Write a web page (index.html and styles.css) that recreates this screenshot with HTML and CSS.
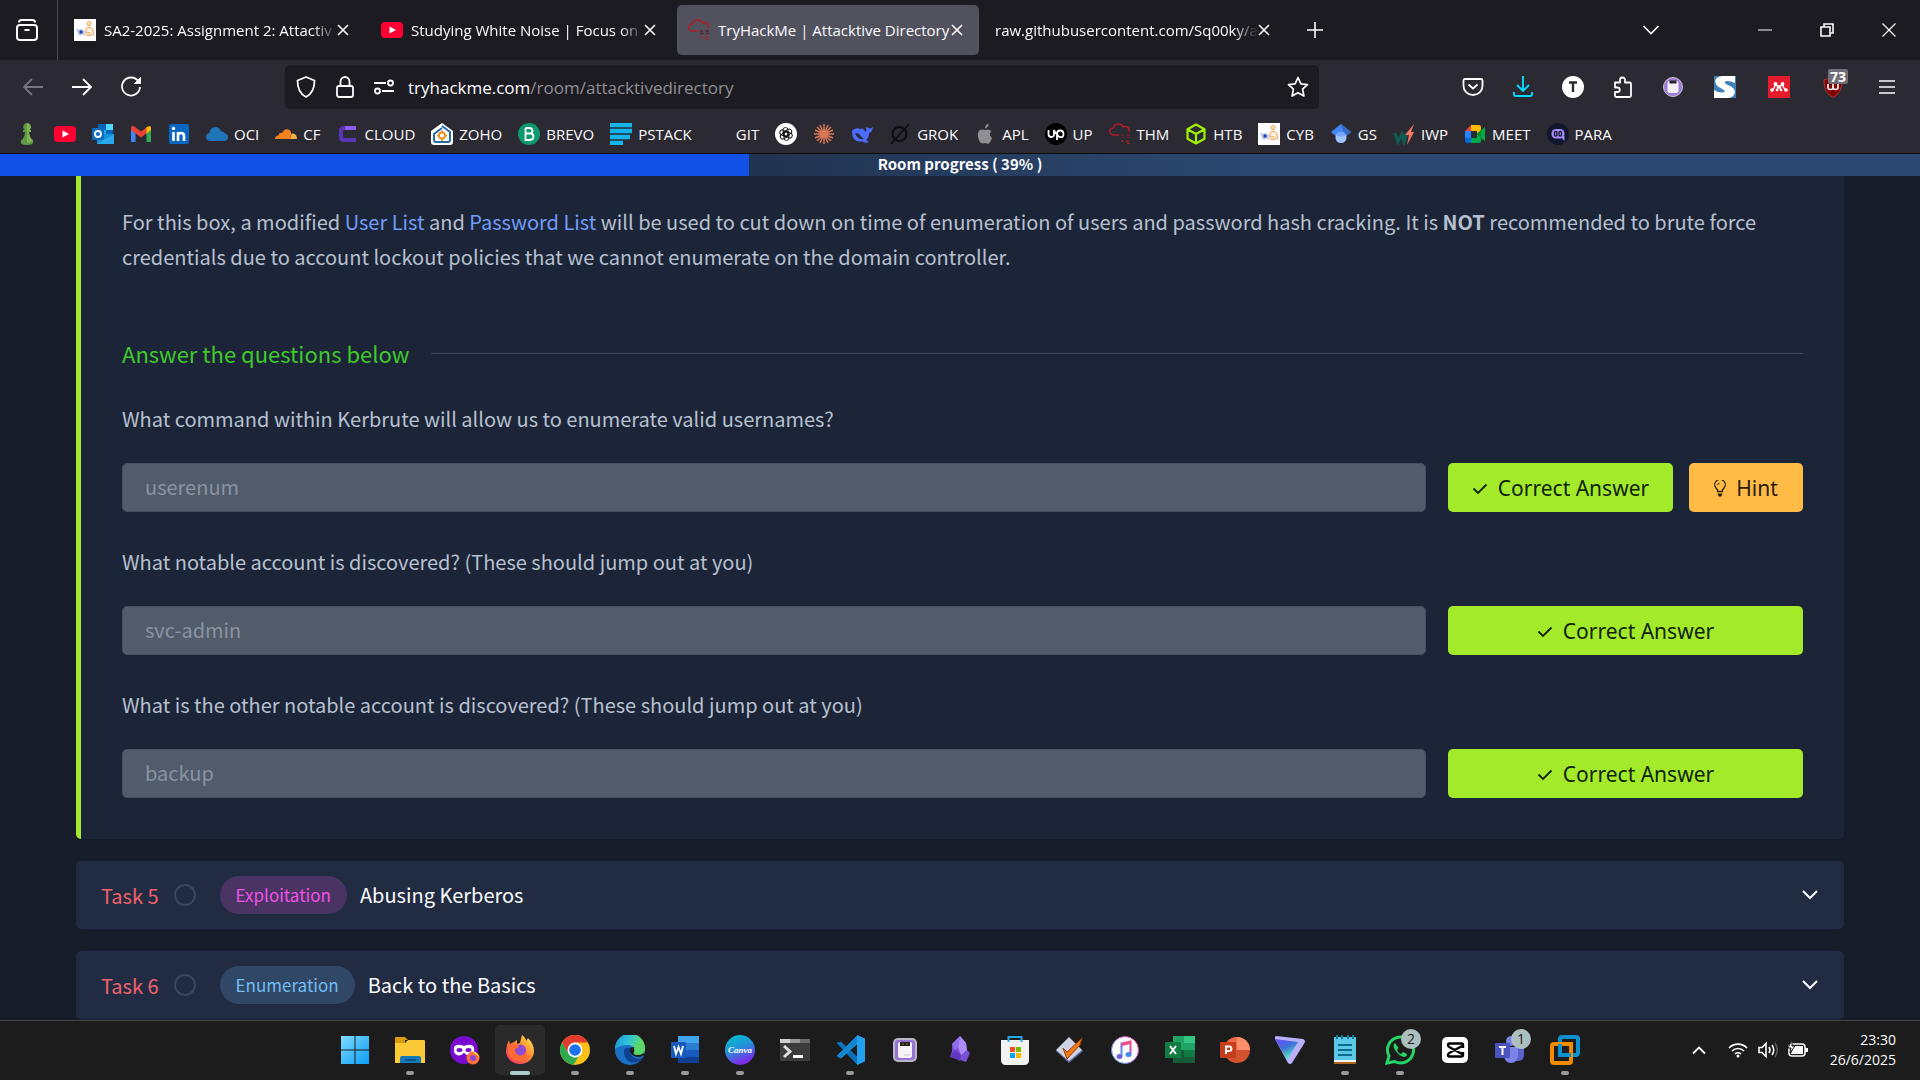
FILE: index.html
```html
<!DOCTYPE html>
<html lang="en">
<head>
  <meta charset="UTF-8">
  <meta name="viewport" content="width=device-width, initial-scale=1.0">
  <title>TryHackMe | Attacktive Directory</title>
  <link rel="stylesheet" href="styles.css">
</head>
<body>
  <!-- Shared icons -->
  <svg class="sprite" aria-hidden="true">
    <symbol id="i-close" viewBox="0 0 12 12"><path d="M1 1l10 10M11 1L1 11" stroke="currentColor" stroke-width="1.6" fill="none"/></symbol>
    <symbol id="i-youtube" viewBox="0 0 22 22"><rect x="0" y="3" width="22" height="16" rx="4" fill="#ff0033"/><path d="M8.500 7.500l6.500 3.500-6.500 3.500z" fill="#fff"/></symbol>
    <symbol id="i-cyb" viewBox="0 0 22 22"><rect width="22" height="22" fill="#fff"/><circle cx="15" cy="4.500" r="2" fill="#fbe3c4" stroke="#f2a24a"/><path d="M12.500 9q2.500-1.500 5 0 2.500 3 2 6.500-3 1.500-8 .5" fill="#fdf0df" stroke="#f2a24a"/><path d="M12.500 9.500l-1 4 5 .5" fill="none" stroke="#f2a24a"/><path d="M2 10l8 .5 1.500 5.500-7 .5z" fill="#c3cce8"/><circle cx="7" cy="13" r="1.700" fill="#1c3fae"/></symbol>
    <symbol id="i-thm" viewBox="0 0 22 22"><path d="M10 12H4a3.500 3.500 0 0 1 .3-7A5.500 5.500 0 0 1 14.500 4a4 4 0 0 1 5.500 5" fill="none" stroke="#b01d24" stroke-width="1.400"/><path d="M12 12h3M17 12h4M12 14.500h4M18 14.500h3" stroke="#5d2632" stroke-width="1.300"/><path d="M12 18h2.500M17 18h3M18 20.500h3" stroke="#a3242b" stroke-width="1.400"/></symbol>
    <symbol id="i-check" viewBox="0 0 16 16"><path d="M1.500 7.500l4.500 4.500L14.500 3.500" fill="none" stroke="currentColor" stroke-width="1.800"/></symbol>
    <symbol id="i-chevron" viewBox="0 0 18 12"><path d="M2 2l7 7 7-7" fill="none" stroke="currentColor" stroke-width="2"/></symbol>
    <symbol id="i-scale" viewBox="0 0 30 30"><rect x="3" y="3" width="24" height="24" rx="5" fill="#bcb7c4"/><rect x="5" y="5" width="20" height="20" rx="3" fill="#9674d4"/><rect x="8" y="7" width="14" height="16" rx="2" fill="#f5f3f8"/><rect x="10" y="7" width="10" height="4" fill="#25231d"/><path d="M12 9h2M16 9h2" stroke="#937f26"/><path d="M14 20h6" stroke="#c9c6d0"/></symbol>
  </svg>

  <header class="browser">
    <!-- Tabs -->
    <div class="tab-bar">
      <button class="all-tabs" aria-label="Recent browsing">
        <svg width="22" height="22" viewBox="0 0 22 22" fill="none" stroke="currentColor" stroke-width="2"><rect x="1" y="6" width="20" height="15" rx="3"/><path d="M3 3.500Q3 1 5.500 1h11Q19 1 19 3.500M8.500 11h5"/></svg>
      </button>
      <div class="tabs">
        <div class="tab">
          <svg class="icon"><use href="#i-cyb"/></svg>
          <span class="tab-label fade">SA2-2025: Assignment 2: Attactiv</span>
          <button class="tab-close" aria-label="Close tab"><svg><use href="#i-close"/></svg></button>
        </div>
        <div class="tab">
          <svg class="icon"><use href="#i-youtube"/></svg>
          <span class="tab-label fade">Studying White Noise | Focus on</span>
          <button class="tab-close" aria-label="Close tab"><svg><use href="#i-close"/></svg></button>
        </div>
        <div class="tab active">
          <svg class="icon"><use href="#i-thm"/></svg>
          <span class="tab-label">TryHackMe | Attacktive Directory</span>
          <button class="tab-close" aria-label="Close tab"><svg><use href="#i-close"/></svg></button>
        </div>
        <div class="tab">
          <span class="tab-label fade">raw.githubusercontent.com/Sq00ky/a</span>
          <button class="tab-close" aria-label="Close tab"><svg><use href="#i-close"/></svg></button>
        </div>
        <button class="new-tab" aria-label="New tab"><svg width="16" height="16" viewBox="0 0 16 16"><path d="M8 0v16M0 8h16" stroke="currentColor" stroke-width="1.600"/></svg></button>
      </div>
      <div class="window-buttons">
        <button class="list-tabs" aria-label="List all tabs"><svg width="18" height="12" viewBox="0 0 18 12"><path d="M1.500 2L9 9.500 16.500 2" fill="none" stroke="currentColor" stroke-width="1.600"/></svg></button>
        <button aria-label="Minimize"><svg width="14" height="14" viewBox="0 0 14 14"><path d="M0 7h14" stroke="currentColor"/></svg></button>
        <button aria-label="Restore"><svg width="14" height="14" viewBox="0 0 14 14" fill="none" stroke="currentColor" stroke-width="1.600"><path d="M1 4h9v9H1zM4 4V1h9v9h-3"/></svg></button>
        <button aria-label="Close"><svg width="14" height="14" viewBox="0 0 14 14"><path d="M.5.5l13 13M13.500.5l-13 13" stroke="currentColor" stroke-width="1.200"/></svg></button>
      </div>
    </div>

    <!-- Address bar -->
    <div class="nav-bar">
      <div class="nav-buttons">
        <button class="dim" aria-label="Back"><svg width="22" height="22" viewBox="0 0 22 22" fill="none" stroke="currentColor" stroke-width="1.800"><path d="M21 11H2M10 3l-8 8 8 8"/></svg></button>
        <button aria-label="Forward"><svg width="22" height="22" viewBox="0 0 22 22" fill="none" stroke="currentColor" stroke-width="1.800"><path d="M1 11h19M12 3l8 8-8 8"/></svg></button>
        <button aria-label="Reload"><svg width="22" height="22" viewBox="0 0 22 22" fill="none" stroke="currentColor" stroke-width="1.800"><path d="M18.500 5.500A9 9 0 1 0 20 11"/><path d="M20.500 1.500v6h-6z" fill="currentColor" stroke-width="1"/></svg></button>
      </div>
      <div class="url-bar">
        <div class="site-info">
          <svg class="icon" viewBox="0 0 22 22" fill="none" stroke="currentColor" stroke-width="1.800"><path d="M11 1l8.500 3.500C19.500 12 17 18 11 21 5 18 2.500 12 2.500 4.500z" stroke-linejoin="round"/></svg>
          <svg class="icon" viewBox="0 0 22 22" fill="none" stroke="currentColor" stroke-width="1.800"><rect x="3" y="10" width="16" height="11" rx="2"/><path d="M6.500 10V5.500a4.500 4.500 0 0 1 9 0V10"/></svg>
          <svg class="icon" viewBox="0 0 22 22" fill="none" stroke="currentColor" stroke-width="1.800"><path d="M1 7h12M9 15h12"/><circle cx="17.500" cy="7" r="2.500"/><circle cx="4.500" cy="15" r="2.500"/></svg>
        </div>
        <a class="url" href="#"><span>tryhackme.com</span>/room/attacktivedirectory</a>
        <button aria-label="Bookmark this page"><svg class="icon" viewBox="0 0 22 22" fill="none" stroke="currentColor" stroke-width="1.700" stroke-linejoin="round"><path d="M11 1.500l2.900 6.300 6.600.8-4.900 4.600 1.300 6.800-5.900-3.300L5.100 20l1.300-6.800L1.500 8.600l6.600-.8z"/></svg></button>
      </div>
      <div class="extensions">
        <div class="toolbar-group">
          <button aria-label="Pocket"><svg class="icon" viewBox="0 0 22 22" fill="none" stroke="currentColor" stroke-width="1.800"><path d="M3 3h16q1.500 0 1.500 1.500V10a9.500 9 0 0 1-19 0V4.500Q1.500 3 3 3zM6.500 8.500l4.500 4 4.500-4"/></svg></button>
          <button class="cyan" aria-label="Downloads"><svg class="icon" viewBox="0 0 22 22" fill="none" stroke="currentColor" stroke-width="1.900"><path d="M11 0v15M5 9l6 6 6-6M2 16v2.500Q2 20 3.500 20h15q1.500 0 1.500-1.500V16"/></svg></button>
          <button aria-label="Account"><svg class="icon" viewBox="0 0 22 22"><circle cx="11" cy="11" r="11" fill="#fff"/><path d="M7 6.500h8M11 6.500V16" stroke="#2b2a33" stroke-width="2.400"/></svg></button>
          <button aria-label="Extensions"><svg class="icon" viewBox="0 0 22 22" fill="none" stroke="currentColor" stroke-width="1.800"><path d="M3 6.500h5V4a2.300 2.300 0 0 1 5 0v2.500h4.500Q19 6.500 19 8v11.500q0 1.500-1.500 1.500H4.500Q3 21 3 19.500V16h2.500a2.200 2.200 0 0 0 0-4.500H3z" stroke-linejoin="round"/></svg></button>
          <button aria-label="Task tracker"><svg class="icon" viewBox="0 0 22 22"><circle cx="11" cy="11" r="9.500" fill="#9b7ed6" stroke="#cbc3dc"/><rect x="5.500" y="5" width="11" height="12" rx="2" fill="#f3f0f9"/><rect x="7.500" y="4.500" width="7" height="3" fill="#28242b"/></svg></button>
        </div>
        <div class="toolbar-group wide">
          <button aria-label="Scribbr"><svg class="icon" viewBox="0 0 22 22"><rect width="22" height="22" fill="#3f80b5"/><path d="M0 14q4 3 9 2.500 3-.5 1-2.500l-6-3.500Q-1 5 3 2q2-2 6-2h12v7q-4-2-8-2-4 .5-1 3l5 2.500q5 3 3.500 7Q19 22 13 22H0z" fill="#fff"/></svg></button>
          <button aria-label="Mendeley"><svg class="icon" viewBox="0 0 22 22"><rect width="22" height="22" fill="#e51b2e"/><path d="M4 14q3-1.500 3-6 4 4.500 8 0 0 4.500 3 6M9.500 10v4M12.500 10v4" fill="none" stroke="#fff" stroke-width="1.400"/><g fill="#fff"><circle cx="7.500" cy="8" r="1.900"/><circle cx="14.500" cy="8" r="1.900"/><circle cx="4" cy="14" r="1.800"/><circle cx="18" cy="14" r="1.800"/><circle cx="11" cy="11" r="1.800"/><circle cx="9" cy="14" r="1.300"/><circle cx="13" cy="14" r="1.300"/></g></svg></button>
          <button class="has-badge" aria-label="uBlock Origin"><svg class="icon" viewBox="0 0 22 22"><path d="M11 1l9 3q.5 13-9 17.500Q1.500 17 2 4z" fill="#800000" stroke="#a8383a"/><path d="M6 8v3.500q0 2 2.500 2t2.500-2V8v3.500q0 2 2.500 2t2.500-2V8" fill="none" stroke="#fff" stroke-width="1.600"/></svg><span class="ext-badge">73</span></button>
          <button aria-label="Menu"><svg class="icon" viewBox="0 0 22 22"><path d="M3 5h16M3 11h16M3 17h16" stroke="currentColor" stroke-width="1.700"/></svg></button>
        </div>
      </div>
    </div>

    <!-- Bookmarks -->
    <nav class="bookmarks">
      <a href="#" aria-label="Chess"><svg class="icon" viewBox="0 0 22 22"><path d="M11 0a4 4 0 0 1 2.500 7H15v2h-2q0 5 4 8.500 1.500 4.500-6 4.500t-6-4.500Q9 14 9 9H7V7h1.500A4 4 0 0 1 11 0z" fill="#5d9948"/><path d="M11 0a4 4 0 0 1 2.500 7H15v2h-2q0 5 4 8.500-1 2-6 2z" fill="#81b64c"/></svg></a>
      <a href="#" aria-label="YouTube"><svg class="icon"><use href="#i-youtube"/></svg></a>
      <a href="#" aria-label="Outlook"><svg class="icon" viewBox="0 0 22 22"><rect x="6" y="1" width="15" height="12" fill="#28a8ea"/><path d="M14 1h7v6h-7z" fill="#50d9ff"/><path d="M6 1h8v6H6zM14 7h7v6h-7z" fill="#0364b8"/><path d="M5 10l17 1v10H5z" fill="#1490df"/><path d="M5 21l17-10v10z" fill="#28a8ea"/><rect x="0" y="5" width="12" height="12" rx="1" fill="#0f6cbd"/><circle cx="6" cy="11" r="3" fill="none" stroke="#fff" stroke-width="1.800"/></svg></a>
      <a href="#" aria-label="Gmail"><svg class="icon" viewBox="0 0 22 22"><path d="M1 5v14h4.500V9z" fill="#4285f4"/><path d="M16.500 9v10H21V5z" fill="#34a853"/><path d="M1 4.500Q2 2 5 4l6 4.500L17 4v6l-6 4.500L5 10 1 7z" fill="#ea4335"/><path d="M16.500 4.500Q20 1.500 21 4.500V7l-4.500 3.500z" fill="#fbbc04"/></svg></a>
      <a href="#" aria-label="LinkedIn"><svg class="icon" viewBox="0 0 22 22"><rect x="1" y="1" width="20" height="20" rx="2" fill="#0a66c2"/><path d="M5.500 9v9M10 9v9M10 18v-5q0-3 3-3t3 3v5" fill="none" stroke="#fff" stroke-width="2.600"/><circle cx="5.500" cy="5.500" r="1.700" fill="#fff"/></svg></a>
      <a href="#"><svg class="icon" viewBox="0 0 22 22"><path d="M5 18q-5 0-5-4 0-3.500 3.500-4Q4 4 9.500 4q4 0 5.500 4.500 3-.5 4 2 3 .5 3 3.500 0 4-4 4z" fill="#1f74b8"/></svg>OCI</a>
      <a href="#"><svg class="icon" viewBox="0 0 22 22"><path d="M0 16q0-3.500 3.500-3.500Q4 9 7 10q2.500-5 6.500-3.500 3 1 2.500 5l-1 4.500z" fill="#f6821f"/><path d="M15 16l1.500-5.500Q22 10 22 16z" fill="#fbad41"/></svg>CF</a>
      <a href="#"><svg class="icon" viewBox="0 0 22 22"><path d="M19 5H7q-3 0-3 3v6q0 3 3 3h12" fill="none" stroke="#5b35b8" stroke-width="4"/><path d="M8 5h11" stroke="#8a5cf0" stroke-width="4"/></svg>CLOUD</a>
      <a href="#"><svg class="icon" viewBox="0 0 22 22"><path d="M11 0l11 8v11q0 3-3 3H3q-3 0-3-3V8z" fill="#fff"/><path d="M11 3l8 6v8q0 2-2 2H5q-2 0-2-2v-6l8-6" fill="none" stroke="#2469ac" stroke-width="2"/><circle cx="11" cy="12.500" r="3" fill="none" stroke="#e69528" stroke-width="2"/><path d="M11 7.500v2M11 16v2M6 12.500h2M14 12.500h2" stroke="#e69528" stroke-width="2"/></svg>ZOHO</a>
      <a href="#"><svg class="icon" viewBox="0 0 22 22"><circle cx="11" cy="11" r="11" fill="#0b996e"/><path d="M7.500 5v12h4.500q3.500-.5 3.500-3.500T12 10.500H7.500M7.500 5H12q2.500.5 2.500 2.800T12 10.500" fill="none" stroke="#fff" stroke-width="1.800"/></svg>BREVO</a>
      <a href="#"><svg class="icon" viewBox="0 0 22 22"><path d="M0 2h22M0 8h22M0 14h20M0 20h13" stroke="#13b5ea" stroke-width="4.500"/></svg>PSTACK</a>
      <a href="#"><span class="icon"></span>GIT</a>
      <a href="#" aria-label="ChatGPT"><svg class="icon" viewBox="0 0 22 22"><circle cx="11" cy="11" r="11" fill="#fff"/><g fill="none" stroke="#111" stroke-width=".9"><rect x="8" y="4.500" width="5" height="9" rx="2.500"/><rect x="8" y="4.500" width="5" height="9" rx="2.500" transform="rotate(60 11 11)"/><rect x="8" y="4.500" width="5" height="9" rx="2.500" transform="rotate(120 11 11)"/><rect x="8" y="4.500" width="5" height="9" rx="2.500" transform="rotate(180 11 11)"/><rect x="8" y="4.500" width="5" height="9" rx="2.500" transform="rotate(240 11 11)"/><rect x="8" y="4.500" width="5" height="9" rx="2.500" transform="rotate(300 11 11)"/></g></svg></a>
      <a href="#" aria-label="Claude"><svg class="icon" viewBox="0 0 22 22"><path d="M11 1v20M1 11h20M4 4l14 14M18 4L4 18M7 2l8 18M15 2L7 20M2 7l18 8M2 15l18-8" stroke="#d97757" stroke-width="1.500"/></svg></a>
      <a href="#" aria-label="DeepSeek"><svg class="icon" viewBox="0 0 22 22"><path d="M1 8q3-4 8-2 2-1 3 0l3 3q1-2-.5-5 3 .5 3.500 1.500 2 0 4-1.500-.5 5-4 6 0 5-3 7l3 2q-4 1.500-6.500-.5Q1 20 1 8z" fill="#4d6bfe"/><path d="M4 10q4 0 5.500 2.500t3.500 3q-2 1.500-5 0T4 10z" fill="#2b2a33"/></svg></a>
      <a href="#"><svg class="icon" viewBox="0 0 22 22" fill="none" stroke="#0d0d10" stroke-width="2"><circle cx="10.500" cy="11" r="7"/><path d="M2 21L20 1" stroke-width="1.800"/></svg>GROK</a>
      <a href="#"><svg class="icon" viewBox="0 0 22 22" fill="#8e8e93"><path d="M11.500 7q3-1.500 6 1-3.500 3.500.5 7-2.500 7-5 5.500-2-1-4 0Q5.500 21 4 14 3 6 8.500 6.500z"/><path d="M11 5.500q0-4 3.500-5 .5 4-3.500 5z"/></svg>APL</a>
      <a href="#"><svg class="icon" viewBox="0 0 22 22"><circle cx="11" cy="11" r="11" fill="#000"/><path d="M3.500 7v4q0 3 2.800 3T9 11V7q1 3 3 4.500M12 17v-6q0-3.500 3.200-3.500T18.500 11t-3 3.200Q13 14 12 11" fill="none" stroke="#fff" stroke-width="1.800"/></svg>UP</a>
      <a href="#"><svg class="icon"><use href="#i-thm"/></svg>THM</a>
      <a href="#"><svg class="icon" viewBox="0 0 22 22" fill="none" stroke="#9fef00" stroke-width="2.200" stroke-linejoin="round"><path d="M11 1.500l8.500 4.700v9.600L11 20.500l-8.500-4.700V6.200zM2.500 6.200L11 11l8.500-4.800M11 11v9.500"/></svg>HTB</a>
      <a href="#"><svg class="icon"><use href="#i-cyb"/></svg>CYB</a>
      <a href="#"><svg class="icon" viewBox="0 0 22 22"><path d="M11 1l10 8-6 5H7L1 9z" fill="#4285f4"/><path d="M11 1l10 8-6 5z" fill="#356ac3"/><circle cx="11" cy="14.500" r="5.500" fill="#a0c3ff"/><path d="M6 12a5.500 5.500 0 0 1 10 0q-5 3-10 0z" fill="#76a7fa"/></svg>GS</a>
      <a href="#"><svg class="icon" viewBox="0 0 22 22"><path d="M2 10l3 9 4-8 2 8 3-9" fill="none" stroke="#0d5c4f" stroke-width="3"/><path d="M21 1l-9 11h4l-2 10 7-13h-3z" fill="#f27a5e"/></svg>IWP</a>
      <a href="#"><svg class="icon" viewBox="0 0 22 22"><path d="M1 8l6-6v6z" fill="#ea4335"/><path d="M7 2h8q2 0 2 2v6h-4V8H7z" fill="#fbbc04"/><path d="M1 8h6v7H1z" fill="#2684fc"/><path d="M1 15h6v5H3q-2 0-2-2z" fill="#0066da"/><path d="M7 15h6v-4l8-7v14l-4-3v3q0 2-2 2H7z" fill="#00ac47"/><path d="M13 11l4-4v8z" fill="#00832d"/></svg>MEET</a>
      <a href="#"><svg class="icon" viewBox="0 0 22 22"><circle cx="11" cy="11" r="11" fill="#11152e"/><rect x="4.500" y="6" width="13" height="9.500" rx="4.500" fill="#a78bfa"/><path d="M13 13h4.500v5z" fill="#a78bfa"/><rect x="7.500" y="8.500" width="2.500" height="4.500" rx="1.200" fill="none" stroke="#11152e" stroke-width="1.300"/><rect x="12" y="8.500" width="2.500" height="4.500" rx="1.200" fill="none" stroke="#11152e" stroke-width="1.300"/></svg>PARA</a>
    </nav>
  </header>

  <div class="progress">
    <div class="progress-fill" style="width: 39%"></div>
    <span class="progress-text">Room progress ( 39% )</span>
  </div>

  <main>
    <section class="task-open">
      <p class="intro">For this box, a modified <a href="#">User List</a> and <a href="#">Password List</a> will be used to cut down on time of enumeration of users and password hash cracking. It is <strong>NOT</strong> recommended to brute force<br>credentials due to account lockout policies that we cannot enumerate on the domain controller.</p>

      <h2 class="answer-title">Answer the questions below</h2>

      <form class="questions">
        <div class="question">
          <label for="answer1">What command within Kerbrute will allow us to enumerate valid usernames?</label>
          <div class="answer-row">
            <input type="text" id="answer1" value="userenum" disabled>
            <div class="answer-buttons">
              <button type="button" class="btn correct"><svg class="check"><use href="#i-check"/></svg>Correct Answer</button>
              <button type="button" class="btn hint"><svg class="bulb" viewBox="0 0 12 17"><path d="M3.700 11.500Q3.700 9.500 2 8a5.200 5.200 0 1 1 8 0Q8.300 9.500 8.300 11.500z" fill="none" stroke="currentColor" stroke-width="1.300"/><path d="M3.500 5q.3-1.700 2-2" fill="none" stroke="currentColor"/><path d="M3.500 13.500h5l-1.200 3H4.700z" fill="currentColor"/></svg>Hint</button>
            </div>
          </div>
        </div>
        <div class="question">
          <label for="answer2">What notable account is discovered? (These should jump out at you)</label>
          <div class="answer-row">
            <input type="text" id="answer2" value="svc-admin" disabled>
            <div class="answer-buttons">
              <button type="button" class="btn correct"><svg class="check"><use href="#i-check"/></svg>Correct Answer</button>
            </div>
          </div>
        </div>
        <div class="question">
          <label for="answer3">What is the other notable account is discovered? (These should jump out at you)</label>
          <div class="answer-row">
            <input type="text" id="answer3" value="backup" disabled>
            <div class="answer-buttons">
              <button type="button" class="btn correct"><svg class="check"><use href="#i-check"/></svg>Correct Answer</button>
            </div>
          </div>
        </div>
      </form>
    </section>

    <button class="task">
      <span class="task-number">Task 5</span>
      <span class="task-status"></span>
      <span class="tag exploitation">Exploitation</span>
      <span class="task-name">Abusing Kerberos</span>
      <svg class="task-arrow"><use href="#i-chevron"/></svg>
    </button>
    <button class="task">
      <span class="task-number">Task 6</span>
      <span class="task-status"></span>
      <span class="tag enumeration">Enumeration</span>
      <span class="task-name">Back to the Basics</span>
      <svg class="task-arrow"><use href="#i-chevron"/></svg>
    </button>
  </main>

  <!-- Taskbar -->
  <footer class="taskbar">
    <div class="apps">
      <button aria-label="Start"><svg viewBox="0 0 30 30"><defs><linearGradient id="win" x1="0" y1="0" x2="1" y2="1"><stop offset="0" stop-color="#7fdcff"/><stop offset="1" stop-color="#0b9cf5"/></linearGradient></defs><path d="M1 1h13.500v13.500H1zM15.500 1H29v13.500H15.500zM1 15.500h13.500V29H1zM15.500 15.500H29V29H15.500z" fill="url(#win)"/></svg></button>
      <button class="running" aria-label="File Explorer"><svg viewBox="0 0 30 30"><path d="M0 3q0-1 1-1h9l3 3h-3v4H0z" fill="#d99b0c"/><path d="M0 8h10l3-3h16q1 0 1 1v22H0z" fill="#fbc935"/><path d="M5 28v-5q0-2 2-2h17q2 0 2 2v5z" fill="#1479b8"/><path d="M10 25h11" stroke="#0b5288" stroke-width="2"/></svg></button>
      <button aria-label="Firefox Private Browsing"><svg viewBox="0 0 30 30"><circle cx="14" cy="15" r="14" fill="#7a0bd0"/><path d="M4 12q3-4 10-1 7-3 10 1 1 8-4.500 8.500-3.500 0-5.500-3-2 3-5.500 3Q3 20 4 12z" fill="#fff"/><ellipse cx="9.500" cy="15" rx="3" ry="2" fill="#7a0bd0"/><ellipse cx="18.500" cy="15" rx="3" ry="2" fill="#7a0bd0"/><circle cx="23" cy="23" r="6.500" fill="#ff7139"/><path d="M23 16q6 2 6.500 7-2-4-5-4z" fill="#ffd23e"/><circle cx="23" cy="23" r="3" fill="#8b45d8"/></svg></button>
      <button class="running current" aria-label="Firefox"><svg viewBox="0 0 30 30"><defs><linearGradient id="fox" x1="1" y1="0" x2="0" y2="1"><stop offset="0" stop-color="#fff44f"/><stop offset=".5" stop-color="#ff7a2f"/><stop offset="1" stop-color="#f02a75"/></linearGradient></defs><path d="M4 5l1 4 4-2 3-2v4l3-1 2-8q4 3 4 6l2-3q6 6 6 13a14 13 0 0 1-28 0Q1 10 4 5z" fill="url(#fox)"/><circle cx="15.500" cy="15" r="5.500" fill="#8e4bd6"/><path d="M3 10q7-2 11 1-1 3-5 3 0 6 6 7 5 0 7-4 0 8-8 9-9 0-11-8z" fill="#ff6a35"/></svg></button>
      <button class="running" aria-label="Chrome"><svg viewBox="0 0 30 30"><circle cx="15" cy="15" r="15" fill="#fbc116"/><path d="M2 7.500A15 15 0 0 1 28 7.500H15L8.500 19z" fill="#e33b2e"/><path d="M2 7.500l6.500 11.300L15 22.500l-1.500 7.400A15 15 0 0 1 2 7.500z" fill="#2da94f"/><path d="M13.500 30L20 19l-5 3-6.500-3.500" fill="#2da94f"/><circle cx="15" cy="15" r="7.500" fill="#fff"/><circle cx="15" cy="15" r="5.800" fill="#1a73e8"/></svg></button>
      <button class="running" aria-label="Edge"><svg viewBox="0 0 30 30"><defs><linearGradient id="edge" x1="0" y1="0" x2="1" y2=".3"><stop offset="0" stop-color="#1b8fd8"/><stop offset=".5" stop-color="#2fc3d8"/><stop offset="1" stop-color="#68dd55"/></linearGradient></defs><circle cx="15" cy="15" r="15" fill="#1b6fc4"/><path d="M0 14A15 15 0 0 1 30 13q0 7-7 7-6 0-4-3 1-7-7-7-7 0-12 4z" fill="url(#edge)"/><path d="M9 15q-1 8 6 12 7 2 13-4-6 2-10-1-5-4-1-8-5-3-8 1z" fill="#0d4390"/><path d="M19 12q-5 0-4 5 2 5 10 5l5-2-3-3q-9 2-8-5z" fill="#1c1c1c"/><path d="M22 8q8 1 8 5 0 7-7 7-6 0-4-3z" fill="#5ad668"/></svg></button>
      <button class="running" aria-label="Word"><svg viewBox="0 0 30 30"><path d="M8 1h21v7H8z" fill="#41a5ee"/><path d="M8 8h21v7H8z" fill="#2b7cd3"/><path d="M8 15h21v7H8z" fill="#185abd"/><path d="M8 22h21v6H8z" fill="#103f91"/><rect x="1" y="7" width="15" height="16" rx="1" fill="#185abd"/><path d="M4 11l2 8 2.500-7 2.500 7 2-8" fill="none" stroke="#fff" stroke-width="1.800"/></svg></button>
      <button class="running" aria-label="Canva"><svg viewBox="0 0 30 30"><defs><linearGradient id="canva" x1="0" y1="0" x2=".4" y2="1"><stop offset="0" stop-color="#00c4cc"/><stop offset=".5" stop-color="#1f95d8"/><stop offset="1" stop-color="#7d2ae8"/></linearGradient></defs><circle cx="15" cy="15" r="15" fill="url(#canva)"/><text x="3" y="18" class="canva-text">Canva</text></svg></button>
      <button aria-label="Terminal"><svg viewBox="0 0 30 30"><rect x="0" y="4" width="30" height="22" rx="1" fill="#3c3c3c"/><path d="M0 4h10v4H0z" fill="#d0d0d0"/><path d="M10 4h10v4H10z" fill="#9a9a9a"/><path d="M20 4h10v4H20z" fill="#6a6a6a"/><path d="M4 11l6 5.500L4 22" fill="none" stroke="#ddd" stroke-width="3"/><path d="M13 21.500h10" stroke="#fff" stroke-width="3"/></svg></button>
      <button class="running" aria-label="VS Code"><svg viewBox="0 0 30 30"><path d="M2 8l4-1 16 15v7z" fill="#0a70b9" stroke="#0a70b9" stroke-linejoin="round"/><path d="M2 21l4 2L22 9V1z" fill="#1587d0" stroke="#1587d0" stroke-linejoin="round"/><path d="M22 0l8 3.500v23L22 30z" fill="#24a0f0"/></svg></button>
      <button aria-label="Scale"><svg><use href="#i-scale"/></svg></button>
      <button aria-label="Obsidian"><svg viewBox="0 0 30 30"><path d="M7 9l8-8 6 7 1 7 3 3-4 9-6-2-10-3 2-6z" fill="#7a4fd8"/><path d="M15 1l6 7 1 7-6 5-3-8z" fill="#ab8df5"/><path d="M5 21l5-6 6 5-1 6z" fill="#6237c0"/><path d="M7 9l8-8-2 11-3 3z" fill="#8f70e8"/></svg></button>
      <button aria-label="Microsoft Store"><svg viewBox="0 0 30 30"><path d="M8.500 8V2h13v6" fill="none" stroke="#26a7e8" stroke-width="2"/><path d="M1 5h28v20q0 5-5 5H6q-5 0-5-5z" fill="#f3f3f3"/><path d="M8.500 5v2M21.500 5v2" stroke="#26a7e8" stroke-width="2"/><path d="M10 12h5v5h-5z" fill="#f25022"/><path d="M16 12h5v5h-5z" fill="#7fba00"/><path d="M10 18h5v5h-5z" fill="#00a4ef"/><path d="M16 18h5v5h-5z" fill="#ffb900"/></svg></button>
      <button aria-label="To-do"><svg viewBox="0 0 30 30"><path d="M14 3l14 13-14 12L1 16z" fill="#5c6b97"/><path d="M14 2l13 13-13 11L1 15z" fill="#ccd4e6"/><path d="M8 13l4 4L27 3l-2 7-13 14z" fill="#ef7a16" stroke="#a43c0b"/></svg></button>
      <button aria-label="iTunes"><svg viewBox="0 0 30 30"><defs><linearGradient id="note" x1="1" y1="0" x2="0" y2="1"><stop offset="0" stop-color="#f8476c"/><stop offset=".5" stop-color="#a45ae0"/><stop offset="1" stop-color="#38a8f0"/></linearGradient></defs><circle cx="15" cy="15" r="13.500" fill="#fbfafc" stroke="url(#note)"/><path d="M11.500 21V8.500l9-2V19" fill="none" stroke="url(#note)" stroke-width="2"/><path d="M11.500 9.500l9-2" stroke="#ef4f8d" stroke-width="3"/><ellipse cx="9.500" cy="21.500" rx="3" ry="2.500" fill="#6b62e0"/><ellipse cx="18.500" cy="19.500" rx="3" ry="2.500" fill="#3f8ce8"/></svg></button>
      <button aria-label="Excel"><svg viewBox="0 0 30 30"><path d="M8 1h22v27H8z" fill="#21a366"/><path d="M19 1h11v7H19z" fill="#33c481"/><path d="M8 15h22v13H8z" fill="#185c37"/><path d="M19 15h11v7H19z" fill="#107c41"/><rect x="0" y="7" width="16" height="16" rx="1" fill="#107c41"/><path d="M5 11l6 8M11 11l-6 8" stroke="#fff" stroke-width="1.900"/></svg></button>
      <button aria-label="PowerPoint"><svg viewBox="0 0 30 30"><circle cx="17" cy="15" r="13" fill="#d35230"/><path d="M17 2a13 13 0 0 1 13 13H17z" fill="#ff8f6b"/><path d="M4 15A13 13 0 0 1 17 2v13z" fill="#ed6c47"/><rect x="0" y="7" width="16" height="16" rx="1" fill="#c43e1c"/><path d="M6 19v-7.500h3.500q2 .3 2 2.300t-2 2.200H6" fill="none" stroke="#fff" stroke-width="1.900"/></svg></button>
      <button aria-label="Proton VPN"><svg viewBox="0 0 30 30"><defs><linearGradient id="vpn" x1="0" y1="0" x2=".5" y2="1"><stop offset="0" stop-color="#6d4aff"/><stop offset=".5" stop-color="#3e74d8"/><stop offset="1" stop-color="#5ff0c0"/></linearGradient></defs><path d="M1 1l27 3q3 1 1.500 4L17 28q-2 2-4 0L0 4q-.5-2 1-3z" fill="#b9b2fb"/><path d="M0 4l23 3L12 25z" fill="url(#vpn)"/></svg></button>
      <button class="running" aria-label="Notepad"><svg viewBox="0 0 30 30"><rect x="4" y="2" width="22" height="27" rx="1" fill="#5cc8e8"/><path d="M4 26h22v3H4z" fill="#b0651d"/><path d="M4 25h22v2H4z" fill="#f3f3f3"/><path d="M7 0v4M12 0v4M18 0v4M23 0v4" stroke="#127a99" stroke-width="2"/><path d="M8 10h14M8 15h14M8 20h14" stroke="#0e6d8a" stroke-width="2"/></svg></button>
      <button class="running" aria-label="WhatsApp"><svg viewBox="0 0 30 30"><path d="M2 28l2-7A13 13 0 1 1 9.500 26.500z" fill="none" stroke="#25d366" stroke-width="3"/><path d="M10 8q-3 2 0 7 4 6 9 7 3-.5 3-3l-4-2-2 2q-3-1-4-4l1.500-2z" fill="#25d366"/></svg><span class="app-badge">2</span></button>
      <button aria-label="CapCut"><svg viewBox="0 0 30 30"><rect x="2" y="2" width="26" height="26" rx="5" fill="#fff"/><path d="M23 13V10q0-1.500-1.500-1.500h-12Q8 8.500 8 10t2 2.500l13 7M23 17v3q0 1.500-1.500 1.500h-12Q8 21.500 8 20t2-2.500l13-7" fill="none" stroke="#000" stroke-width="2.400"/></svg></button>
      <button aria-label="Teams"><svg viewBox="0 0 30 30"><circle cx="24" cy="8" r="4" fill="#5b62c9"/><circle cx="16" cy="6" r="5" fill="#7b83eb"/><path d="M19 12h10v9q-1 5-6 5h-4z" fill="#5b62c9"/><path d="M9 12h14v9q-1 7-7 7t-7-7z" fill="#7b83eb"/><rect x="0" y="8" width="15" height="15" rx="1" fill="#4b53bc"/><path d="M4 12h7M7.500 12v8" stroke="#fff" stroke-width="2"/></svg><span class="app-badge">1</span></button>
      <button class="running" aria-label="VMware"><svg viewBox="0 0 30 30" fill="none" stroke-width="4"><rect x="10" y="2" width="18" height="18" rx="2" stroke="#0c91cf"/><rect x="2" y="9" width="19" height="19" rx="2" stroke="#f38b00"/><path d="M10 9v11h11" stroke="#0c91cf"/><path d="M14 9h7v7" stroke="#f38b00"/></svg></button>
    </div>
    <div class="tray">
      <button aria-label="Show hidden icons"><svg width="14" height="10" viewBox="0 0 14 10"><path d="M1 8.500l6-6 6 6" fill="none" stroke="currentColor" stroke-width="1.800"/></svg></button>
      <div class="status">
        <svg width="20" height="20" viewBox="0 0 20 20" fill="none" stroke="currentColor" stroke-width="1.700"><path d="M1 8a12.500 12.500 0 0 1 18 0M4 11a8.500 8.500 0 0 1 12 0M7 14a4.300 4.300 0 0 1 6 0"/><circle cx="10" cy="16" r="1.500" fill="currentColor" stroke="none"/></svg>
        <svg width="20" height="20" viewBox="0 0 20 20" fill="none" stroke="currentColor" stroke-width="1.600"><path d="M1 7.500h3l4-4v13l-4-4H1zM11 7q2 3 0 6M14 5q3.500 5 0 10"/><path d="M17 3q4.500 7 0 14" stroke="#555"/></svg>
        <svg width="20" height="20" viewBox="0 0 20 20"><rect x="1" y="4" width="16" height="12" rx="3" fill="none" stroke="currentColor" stroke-width="1.600"/><path d="M18.500 8v4" stroke="currentColor" stroke-width="3"/><path d="M6 6h9v8H3z" fill="currentColor"/><path d="M4 0L0 8h3l-1 5 5-7H4z" fill="currentColor" stroke="#1c1c1c"/></svg>
      </div>
      <div class="clock"><time>23:30</time><time>26/6/2025</time></div>
    </div>
  </footer>
</body>
</html>
```
FILE: styles.css
```css
* {
  margin: 0;
  padding: 0;
  box-sizing: border-box;
}
body {
  display: flex;
  flex-direction: column;
  height: 100vh;
  overflow: hidden;
  background-color: #161c2a;
  color: #fbfbfe;
  font-family: "Open Sans", "Noto Sans", sans-serif;
}
button {
  border: none;
  background: none;
  color: inherit;
  font: inherit;
  cursor: pointer;
}
a {
  color: inherit;
  text-decoration: none;
}
svg {
  display: block;
  flex-shrink: 0;
}
.sprite {
  position: absolute;
  width: 0;
  height: 0;
}
.icon {
  width: 22px;
  height: 22px;
  flex-shrink: 0;
}

/* Browser */
.browser {
  background-color: #2b2a33;
  border-bottom: 1px solid #0c0c0d;
}
.tab-bar {
  display: flex;
  height: 60px;
  background-color: #1c1b22;
}
.all-tabs {
  display: grid;
  place-items: center;
  width: 58px;
  padding-right: 4px;
  border-right: 1px solid #4a4a52;
}
.tabs {
  display: flex;
  flex: 1;
  gap: 5px;
  padding: 5px;
}
.tab {
  display: flex;
  align-items: center;
  width: 302px;
  padding: 0 16px 0 11px;
  border-radius: 5px;
  font-size: 15px;
}
.tab .icon {
  margin-right: 8px;
}
.tab.active {
  background-color: #52525e;
}
.tab-label {
  flex: 1;
  overflow: hidden;
  white-space: nowrap;
}
.tab-label.fade {
  mask-image: linear-gradient(to left, transparent, #000 24px);
}
.tab-close svg {
  width: 12px;
  height: 12px;
}
.new-tab {
  width: 48px;
  display: grid;
  place-items: center;
}
.window-buttons {
  display: flex;
}
.window-buttons button {
  display: grid;
  place-items: center;
  width: 62px;
}
.window-buttons .list-tabs {
  margin-right: 52px;
}

.nav-bar {
  display: flex;
  align-items: center;
  padding: 5px 22px;
}
.nav-buttons {
  display: flex;
  gap: 27px;
  width: 263px;
}
.dim {
  color: #77767e;
}
.url-bar {
  display: flex;
  align-items: center;
  gap: 13px;
  flex: 1;
  height: 44px;
  padding: 0 10px;
  border-radius: 5px;
  background-color: #1c1b22;
}
.site-info {
  display: flex;
  gap: 17px;
}
.url {
  flex: 1;
  font-size: 17px;
  color: #8f8f96;
}
.url span {
  color: #fbfbfe;
}
.extensions {
  display: flex;
  gap: 30px;
  margin-left: 143px;
}
.toolbar-group {
  display: flex;
  gap: 28px;
}
.toolbar-group.wide {
  gap: 32px;
}
.cyan {
  color: #00ddff;
}
.has-badge {
  position: relative;
}
.ext-badge {
  position: absolute;
  top: -7px;
  left: 6px;
  padding: 0 2px;
  border-radius: 2px;
  background-color: #6f6e76;
  font-size: 14px;
  line-height: 15px;
  font-weight: 700;
}

.bookmarks {
  display: flex;
  align-items: center;
  gap: 16px;
  height: 39px;
  padding: 0 16px;
  font-size: 15px;
}
.bookmarks a {
  display: flex;
  align-items: center;
  gap: 6px;
}

/* Room progress */
.progress {
  position: relative;
  height: 22px;
  flex-shrink: 0;
  background: linear-gradient(90deg, #213350 39%, #2c4870 65%);
}
.progress-fill {
  height: 100%;
  background-color: #1252e8;
}
.progress-text {
  position: absolute;
  inset: 0;
  text-align: center;
  font: bold 15px/20px "Noto Sans CJK SC", sans-serif;
}

/* Room content */
main {
  display: flex;
  flex-direction: column;
  gap: 22px;
  flex: 1;
  min-height: 0;
  overflow: hidden;
  padding: 0 76px;
  font-family: "Noto Sans CJK SC", sans-serif;
  font-size: 20px;
}
.task-open {
  flex-shrink: 0;
  padding: 28px 41px 41px;
  border-left: 5px solid #a3ea2a;
  border-radius: 0 0 5px 5px;
  background-color: #1c2538;
  color: #b7c0cf;
  line-height: 35px;
}
.intro a {
  color: #719cf9;
}
.answer-title {
  display: flex;
  align-items: center;
  gap: 22px;
  margin: 62px 0 30px;
  color: #3fca2a;
  font-size: 22px;
  font-weight: 400;
}
.answer-title::after {
  content: "";
  flex: 1;
  height: 1px;
  background-color: #3c475c;
}
.questions {
  display: grid;
  gap: 32px;
}
.question label {
  display: block;
  margin-bottom: 27px;
}
.answer-row {
  display: flex;
  gap: 22px;
}
.answer-row input {
  flex: 1;
  height: 49px;
  padding: 0 22px 2px;
  border: 1px solid #464f60;
  border-radius: 5px;
  background-color: #525b6a;
  color: #8a93a1;
  font: inherit;
}
.answer-buttons {
  display: flex;
  gap: 16px;
  width: 355px;
}
.btn {
  display: flex;
  align-items: center;
  justify-content: center;
  gap: 10px;
  height: 49px;
  padding-top: 2px;
  border-radius: 5px;
  font-family: "Noto Sans", sans-serif;
  font-size: 21px;
  white-space: nowrap;
}
.correct {
  flex: 1;
  background-color: #a3ea2a;
  color: #10240c;
}
.check {
  width: 16px;
  height: 16px;
}
.hint {
  width: 114px;
  background-color: #ffbb45;
  color: #2a2010;
}
.bulb {
  width: 12px;
  height: 17px;
}

.task {
  display: flex;
  align-items: center;
  flex-shrink: 0;
  height: 68px;
  padding: 0 25px;
  border-radius: 5px;
  background-color: #212c42;
  text-align: left;
}
.task-number {
  color: #f0616d;
}
.task-status {
  width: 22px;
  height: 22px;
  margin: 0 24px 0 15px;
  border: 2px solid #3a465b;
  border-radius: 50%;
}
.tag {
  padding: 0 16px;
  border-radius: 19px;
  font-size: 17px;
  line-height: 38px;
}
.exploitation {
  background-color: #4a3463;
  color: #f252e8;
}
.enumeration {
  background-color: #304866;
  color: #73bdf2;
}
.task-name {
  flex: 1;
  margin-left: 13px;
  padding-bottom: 2px;
}
.task-arrow {
  width: 18px;
  height: 12px;
}

/* Taskbar */
.taskbar {
  display: grid;
  grid-template-columns: 1fr auto 1fr;
  align-items: center;
  flex-shrink: 0;
  height: 60px;
  padding-bottom: 2px;
  border-top: 1px solid #454545;
  background-color: #1c1c1c;
}
.apps {
  grid-column: 2;
  display: flex;
  gap: 5px;
}
.apps button {
  position: relative;
  display: grid;
  place-items: center;
  width: 50px;
  height: 50px;
  border-radius: 5px;
}
.apps svg {
  width: 30px;
  height: 30px;
}
.apps .current {
  background-color: #2a2a2a;
}
.running::after {
  content: "";
  position: absolute;
  bottom: 0;
  width: 8px;
  height: 4px;
  border-radius: 2px;
  background-color: #9a9a9a;
}
.current::after {
  width: 20px;
  background-color: #aecbcb;
}
.canva-text {
  font: italic bold 9px "Liberation Serif", serif;
  fill: #fff;
}
.app-badge {
  position: absolute;
  top: 4px;
  right: 4px;
  width: 20px;
  border-radius: 50%;
  background-color: #aebfc0;
  color: #1c1c1c;
  font-size: 14px;
  line-height: 20px;
}
.tray {
  display: flex;
  align-items: center;
  justify-content: flex-end;
  gap: 22px;
  padding-right: 24px;
}
.status {
  display: flex;
  gap: 10px;
}
.clock {
  display: grid;
  text-align: right;
  font-size: 14px;
  line-height: 20px;
}
```
